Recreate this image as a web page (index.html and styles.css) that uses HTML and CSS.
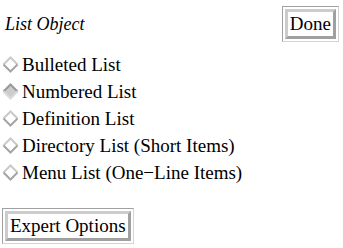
FILE: index.html
```html
<!DOCTYPE html>
<html lang="en">
<head>
    <meta charset="UTF-8">
    <meta name="viewport" content="width=device-width, initial-scale=1.0">
    <title>List Object</title>
    <link rel="stylesheet" href="styles.css">
</head>
<body>
    <div class="panel">
        <!-- Header with title and Done -->
        <div class="panel-header">
            <span class="panel-title">List Object</span>
            <span class="btn-frame"><button class="btn">Done</button></span>
        </div>

        <!-- List type choices -->
        <div class="choices">
            <div class="choice">
                <svg class="diamond" width="17" height="17" viewBox="0 0 17 17">
                    <polyline points="1.5,8.5 8.5,1.5 15.5,8.5" fill="none" stroke="#cacaca" stroke-width="2"/>
                    <polyline points="1.5,8.5 8.5,15.5 15.5,8.5" fill="none" stroke="#a4a4a4" stroke-width="2"/>
                </svg>
                <span>Bulleted List</span>
            </div>
            <div class="choice">
                <svg class="diamond" width="17" height="17" viewBox="0 0 17 17">
                    <polygon points="1.5,8.5 8.5,1.5 15.5,8.5 8.5,15.5" fill="#cccccc"/>
                    <polyline points="1.5,8.5 8.5,1.5 15.5,8.5" fill="none" stroke="#999999" stroke-width="2"/>
                    <polyline points="1.5,8.5 8.5,15.5 15.5,8.5" fill="none" stroke="#dadada" stroke-width="2"/>
                </svg>
                <span>Numbered List</span>
            </div>
            <div class="choice">
                <svg class="diamond" width="17" height="17" viewBox="0 0 17 17">
                    <polyline points="1.5,8.5 8.5,1.5 15.5,8.5" fill="none" stroke="#cacaca" stroke-width="2"/>
                    <polyline points="1.5,8.5 8.5,15.5 15.5,8.5" fill="none" stroke="#a4a4a4" stroke-width="2"/>
                </svg>
                <span>Definition List</span>
            </div>
            <div class="choice">
                <svg class="diamond" width="17" height="17" viewBox="0 0 17 17">
                    <polyline points="1.5,8.5 8.5,1.5 15.5,8.5" fill="none" stroke="#cacaca" stroke-width="2"/>
                    <polyline points="1.5,8.5 8.5,15.5 15.5,8.5" fill="none" stroke="#a4a4a4" stroke-width="2"/>
                </svg>
                <span>Directory List (Short Items)</span>
            </div>
            <div class="choice">
                <svg class="diamond" width="17" height="17" viewBox="0 0 17 17">
                    <polyline points="1.5,8.5 8.5,1.5 15.5,8.5" fill="none" stroke="#cacaca" stroke-width="2"/>
                    <polyline points="1.5,8.5 8.5,15.5 15.5,8.5" fill="none" stroke="#a4a4a4" stroke-width="2"/>
                </svg>
                <span>Menu List (One&minus;Line Items)</span>
            </div>
        </div>

        <div class="footer">
            <span class="btn-frame"><button class="btn">Expert Options</button></span>
        </div>
    </div>
</body>
</html>
```

FILE: styles.css
```css
body {
    margin: 0;
    background: #ffffff;
    font-family: "Liberation Serif", "Times New Roman", serif;
    font-size: 19px;
    color: #000000;
}
.panel {
    display: flex;
    flex-direction: column;
}
.panel-header {
    display: flex;
    justify-content: space-between;
    align-items: center;
    padding: 6px 4px 0 5px;
}
.panel-title {
    font-style: italic;
    font-size: 18px;
}
.btn-frame {
    display: inline-block;
    padding: 2px;
    border: 1px solid;
    border-color: #a0a0a0 #d4d4d4 #d4d4d4 #a0a0a0;
    background: #ffffff;
}
.btn {
    display: block;
    font-family: inherit;
    font-size: 19px;
    line-height: 22px;
    color: #000000;
    background: #ffffff;
    margin: 0;
    padding: 1px 2px;
    border: 3px solid;
    border-color: #cccccc #a0a0a0 #a0a0a0 #cccccc;
    border-radius: 0;
}
.choices {
    display: flex;
    flex-direction: column;
    margin-top: 9px;
    padding-left: 2px;
}
.choice {
    display: flex;
    align-items: center;
    gap: 3px;
    height: 27px;
    line-height: 27px;
}
.diamond {
    flex: 0 0 17px;
}
.footer {
    margin-top: 22px;
    padding-left: 2px;
}
```
